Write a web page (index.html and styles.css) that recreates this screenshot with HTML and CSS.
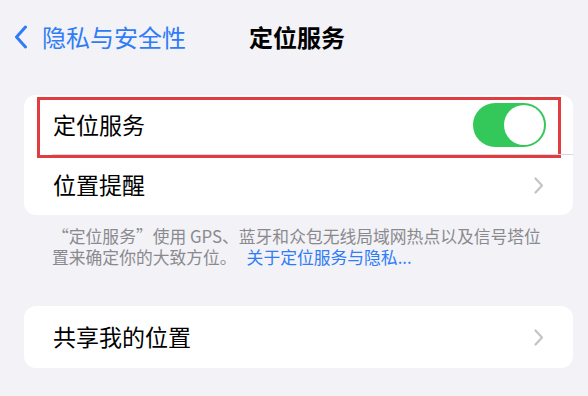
FILE: index.html
```html
<!DOCTYPE html>
<html lang="zh-CN">
<head>
<meta charset="utf-8">
<link rel="stylesheet" href="styles.css">
</head>
<body>
<div class="nav">
  <div class="back">
    <svg class="back-icon" width="14" height="24" viewBox="0 0 14 24"><path d="M11.5 2 L2.5 12 L11.5 22" fill="none" stroke="#2f7cf6" stroke-width="3" stroke-linecap="round" stroke-linejoin="round"/></svg>
    <span class="back-text">隐私与安全性</span>
  </div>
  <div class="title">定位服务</div>
  <div></div>
</div>

<div class="card card-first">
  <div class="row row-sep">
    <span class="label">定位服务</span>
    <div class="toggle"><div class="knob"></div></div>
    <div class="highlight"></div>
  </div>
  <div class="row">
    <span class="label">位置提醒</span>
    <svg class="chev" width="10" height="17" viewBox="0 0 10 17"><path d="M1.5 1.5 L8 8.5 L1.5 15.5" fill="none" stroke="#c4c4c7" stroke-width="2.2" stroke-linecap="round" stroke-linejoin="round"/></svg>
  </div>
</div>

<p class="note">“定位服务”使用 GPS、蓝牙和众包无线局域网热点以及信号塔位置来确定你的大致方位。<span class="link">关于定位服务与隐私...</span></p>

<div class="card card-second">
  <div class="row">
    <span class="label">共享我的位置</span>
    <svg class="chev" width="10" height="17" viewBox="0 0 10 17"><path d="M1.5 1.5 L8 8.5 L1.5 15.5" fill="none" stroke="#c4c4c7" stroke-width="2.2" stroke-linecap="round" stroke-linejoin="round"/></svg>
  </div>
</div>
</body>
</html>
```
FILE: styles.css
```css
* { box-sizing: border-box; }
body {
  margin: 0;
  width: 588px;
  height: 396px;
  overflow: hidden;
  background: #f2f2f7;
  font-family: "Noto Sans CJK SC", "Noto Sans", sans-serif;
  color: #000;
}
.nav {
  display: grid;
  grid-template-columns: 1fr auto 1fr;
  align-items: center;
  height: 44px;
  margin-top: 15px;
}
.back {
  display: flex;
  align-items: center;
  padding-left: 14px;
  gap: 14px;
  color: #2f7cf6;
}
.back-icon { display: block; }
.back-text { font-size: 24px; line-height: 30px; }
.title {
  font-size: 24px;
  font-weight: 700;
  line-height: 30px;
  padding-left: 6px;
}
.card {
  background: #fff;
  border-radius: 12px;
  margin-left: 24px;
  margin-right: 15px;
}
.card-first { margin-top: 36px; }
.card-second { margin-top: 39px; }
.row {
  position: relative;
  display: flex;
  align-items: center;
  justify-content: space-between;
  height: 60px;
  padding-left: 29px;
  padding-right: 28px;
}
.card-second .row { height: 62px; }
.row-sep::after {
  content: "";
  position: absolute;
  left: 28px;
  right: 0;
  bottom: 0;
  height: 1px;
  background: #d8d8dc;
}
.label { font-size: 23px; line-height: 30px; margin-top: -3px; }
.chev { display: block; margin-right: 1px; }
.toggle {
  width: 73px;
  height: 44px;
  border-radius: 22px;
  background: #34c759;
  padding: 2px;
  display: flex;
  justify-content: flex-end;
  margin-right: -1px;
}
.knob {
  width: 40px;
  height: 40px;
  border-radius: 50%;
  background: #fff;
}
.highlight {
  position: absolute;
  left: 13px;
  top: 2px;
  width: 524px;
  height: 61px;
  border: 3px solid #e23b40;
  pointer-events: none;
}
.note {
  margin: 11px 36px 0 52px;
  font-size: 16.8px;
  line-height: 20.5px;
  color: #8a8a8e;
}
.link { color: #2f7cf6; margin-left: 10px; }
```
